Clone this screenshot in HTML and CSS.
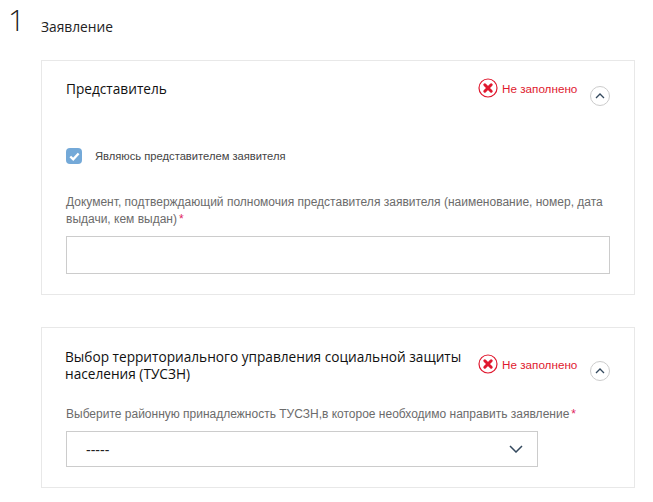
FILE: index.html
```html
<!DOCTYPE html>
<html lang="ru">
<head>
<meta charset="utf-8">
<title>Заявление</title>
<link rel="stylesheet" href="styles.css">
</head>
<body>
<header class="step">
  <span class="step-num">1</span>
  <span class="step-title">Заявление</span>
</header>
<main class="cards">
  <section class="card card-first">
    <div class="card-head">
      <h2 class="card-title">Представитель</h2>
      <div class="status">
        <svg class="status-icon" width="20" height="20" viewBox="0 0 20 20"><circle cx="10" cy="10" r="9" fill="none" stroke="#e0192f" stroke-width="1.2"/><path d="M6.8 6.8l6.4 6.4M13.2 6.8l-6.4 6.4" stroke="#e0192f" stroke-width="3" stroke-linecap="round"/></svg>
        <span class="status-text">Не заполнено</span>
      </div>
      <button class="toggle" type="button"><svg width="10" height="6" viewBox="0 0 10 6"><path d="M1 5l4-4 4 4" fill="none" stroke="#34495e" stroke-width="1.3"/></svg></button>
    </div>
    <label class="check">
      <span class="check-box"><svg width="11" height="9" viewBox="0 0 11 9"><path d="M1.3 4.5l2.9 2.8 5.4-5.8" fill="none" stroke="#fff" stroke-width="2.4"/></svg></span>
      <span class="check-text">Являюсь представителем заявителя</span>
    </label>
    <p class="label">Документ, подтверждающий полномочия представителя заявителя (наименование, номер, дата выдачи, кем выдан)<span class="req">*</span></p>
    <input class="input" type="text">
  </section>
  <section class="card card-second">
    <div class="card-head">
      <h2 class="card-title">Выбор территориального управления социальной защиты населения (ТУСЗН)</h2>
      <div class="status">
        <svg class="status-icon" width="20" height="20" viewBox="0 0 20 20"><circle cx="10" cy="10" r="9" fill="none" stroke="#e0192f" stroke-width="1.2"/><path d="M6.8 6.8l6.4 6.4M13.2 6.8l-6.4 6.4" stroke="#e0192f" stroke-width="3" stroke-linecap="round"/></svg>
        <span class="status-text">Не заполнено</span>
      </div>
      <button class="toggle" type="button"><svg width="10" height="6" viewBox="0 0 10 6"><path d="M1 5l4-4 4 4" fill="none" stroke="#34495e" stroke-width="1.3"/></svg></button>
    </div>
    <p class="label label-select">Выберите районную принадлежность ТУСЗН,в которое необходимо направить заявление<span class="req">*</span></p>
    <div class="select">
      <span class="select-value">-----</span>
      <svg width="14" height="8" viewBox="0 0 14 8"><path d="M1 1l6 6 6-6" fill="none" stroke="#34495e" stroke-width="1.5"/></svg>
    </div>
  </section>
</main>
</body>
</html>
```
FILE: styles.css
```css
* { box-sizing: border-box; }
html, body { margin: 0; padding: 0; background: #fff; }
body { width: 653px; height: 502px; overflow: hidden; font-family: "Liberation Sans", Arial, sans-serif; }
.step { display: flex; align-items: flex-start; height: 50px; padding-left: 8px; }
.step-num { width: 33px; font-family: "Open Sans", sans-serif; font-weight: 300; font-size: 30px; line-height: 40px; color: #222; }
.step-title { margin-top: 17px; font-family: "Open Sans", sans-serif; font-size: 13.75px; line-height: 20px; color: #222; }
.cards { display: flex; flex-direction: column; gap: 32px; margin: 10px 18px 0 41px; }
.card { border: 1px solid #e8e8e8; padding: 0 24px; }
.card-first { height: 235px; }
.card-second { height: 161px; }
.card-head { display: flex; align-items: flex-start; }
.card-title { flex: 1; margin: 0; font-family: "Open Sans", sans-serif; font-weight: 400; font-size: 13.67px; line-height: 17px; color: #111; }
.card-first .card-title { padding-top: 19px; }
.card-second .card-title { padding-top: 20px; margin-left: -1px; max-width: 413px; }
.status { display: flex; align-items: center; gap: 4px; width: 112px; flex: none; }
.card-first .status { margin-top: 17px; }
.card-second .status { margin-top: 26px; }
.status-text { font-size: 11.7px; color: #e0192f; white-space: nowrap; }
.toggle { flex: none; width: 20px; height: 20px; margin: 0; padding: 0; border: 1px solid #ccc; border-radius: 50%; background: #fff; display: flex; align-items: center; justify-content: center; }
.card-first .toggle { margin-top: 25px; }
.card-second .toggle { margin-top: 33px; }
.check { display: flex; align-items: center; gap: 13px; margin-top: 42px; }
.check-box { width: 16px; height: 16px; border-radius: 4px; background: #74a9d8; display: flex; align-items: center; justify-content: center; }
.check-text { font-size: 11.2px; color: #444; }
.label { margin: 0; font-size: 12px; line-height: 17px; color: #6b6b6b; }
.card-first .label { margin-top: 30px; }
.label-select { margin-top: 24px; }
.req { margin-left: 2px; color: #e0245e; }
.input { display: block; width: 544px; height: 38px; margin-top: 8px; border: 1px solid #ccc; background: #fff; outline: none; }
.select { display: flex; align-items: center; justify-content: space-between; width: 472px; height: 36px; margin-top: 8px; padding: 0 14px 0 19px; border: 1px solid #ccc; }
.select-value { margin-top: 2px; font-size: 14px; color: #222; }
```
